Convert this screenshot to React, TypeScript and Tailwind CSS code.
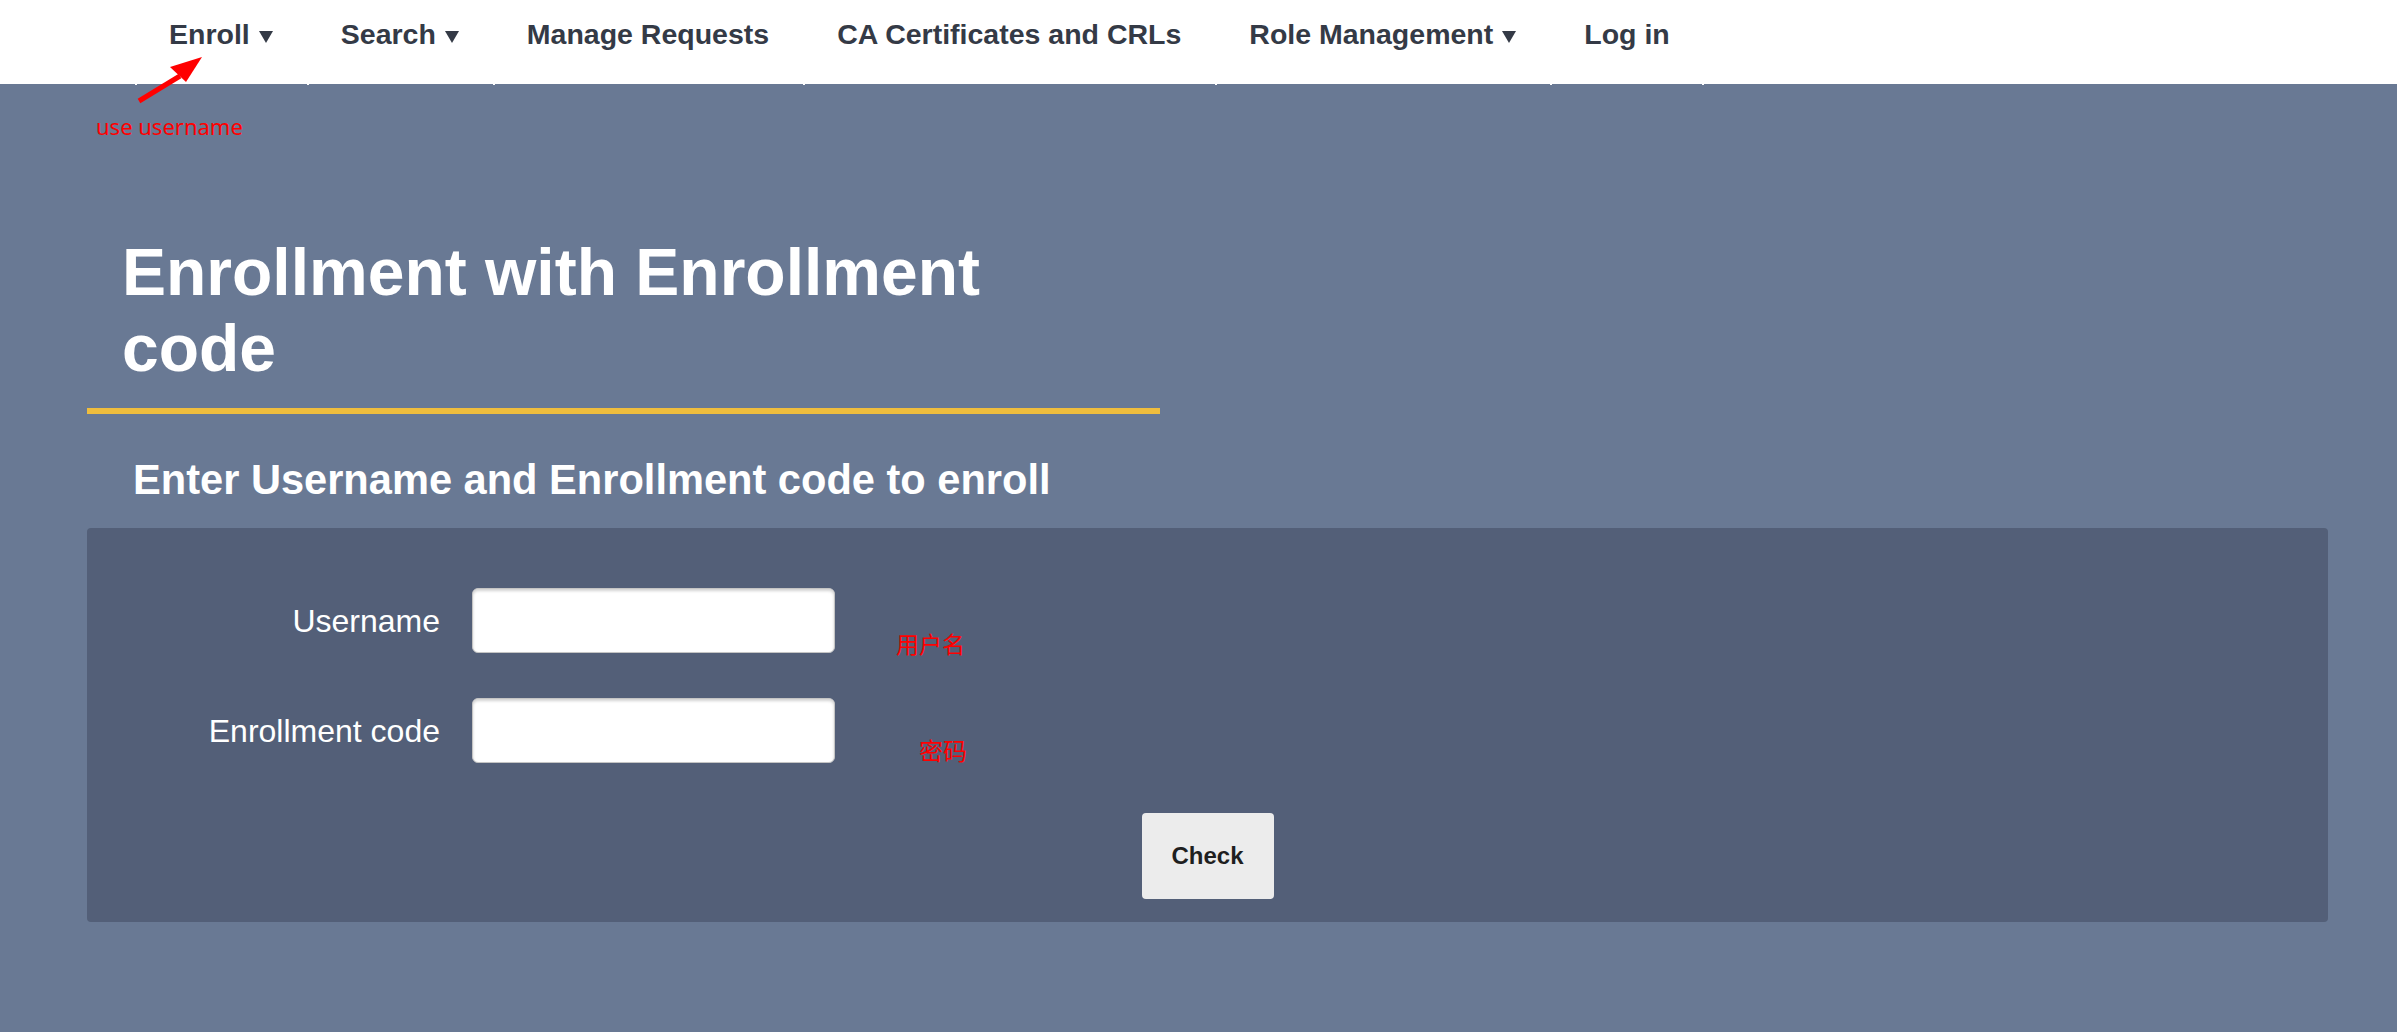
const navItems = [
  { label: 'Enroll', caret: true },
  { label: 'Search', caret: true },
  { label: 'Manage Requests', caret: false },
  { label: 'CA Certificates and CRLs', caret: false },
  { label: 'Role Management', caret: true },
  { label: 'Log in', caret: false },
];

function Caret() {
  return (
    <svg className="ml-[9px] mt-[13px] h-[12px] w-[14px] shrink-0" viewBox="0 0 14 12">
      <polygon points="0,0 14,0 7,12" fill="#343a46" />
    </svg>
  );
}

export default function App() {
  return (
    <div className="relative min-h-[1032px] bg-[#697994] font-['Liberation_Sans',Arial,sans-serif]">
      {/* top navigation */}
      <nav className="h-[84px] bg-white">
        <ul className="flex pl-[135px]">
          {navItems.map((item, i) => (
            <li key={item.label} className="relative flex h-[84px] items-start px-[34px] pt-[18px]">
              <span className="text-[28.5px] font-bold leading-[32px] text-[#343a46] whitespace-nowrap">
                {item.label}
              </span>
              {item.caret && <Caret />}
              <span className="absolute -bottom-[1px] left-0 h-[1px] w-[2px] bg-white" />
              {i === navItems.length - 1 && (
                <span className="absolute -bottom-[1px] right-0 h-[1px] w-[2px] bg-white" />
              )}
            </li>
          ))}
        </ul>
      </nav>

      {/* red annotation under Enroll */}
      <svg className="absolute left-[130px] top-[50px] h-[60px] w-[80px]" viewBox="0 0 80 60">
        <line x1="9" y1="51" x2="50" y2="26" stroke="#ff0000" strokeWidth="5" />
        <polygon points="72,7 40,17 56,32" fill="#ff0000" />
      </svg>
      <span className="absolute left-[96px] top-[115px] font-['Noto_Sans',sans-serif] text-[22px] leading-[22px] text-[#ff0000]">
        use username
      </span>

      <main className="pl-[87px] pr-[69px] pt-[150px]">
        <div className="w-[1073px] border-b-[6px] border-[#efbd3d] pb-[22px] pl-[35px] pr-[34px]">
          <h1 className="text-[66px] font-bold leading-[76px] text-white">
            Enrollment with Enrollment code
          </h1>
        </div>

        <h2 className="mt-[42px] pl-[46px] text-[41.6px] font-bold leading-[48px] text-white">
          Enter Username and Enrollment code to enroll
        </h2>

        <div className="relative mt-[24px] h-[394px] rounded-[4px] bg-[#535f78] pt-[60px]">
          <div className="flex flex-col gap-[45px]">
            <div className="flex items-center">
              <label className="w-[353px] text-right text-[32px] leading-[36px] text-white">Username</label>
              <input
                type="text"
                className="ml-[32px] h-[65px] w-[363px] rounded-[6px] border border-[#c4c4c4] bg-white shadow-[inset_0_2px_3px_rgba(0,0,0,0.18)] outline-none"
              />
            </div>
            <div className="flex items-center">
              <label className="w-[353px] text-right text-[32px] leading-[36px] text-white">Enrollment code</label>
              <input
                type="text"
                className="ml-[32px] h-[65px] w-[363px] rounded-[6px] border border-[#c4c4c4] bg-white shadow-[inset_0_2px_3px_rgba(0,0,0,0.18)] outline-none"
              />
            </div>
          </div>

          <div className="mt-[50px] flex justify-center">
            <button className="h-[86px] w-[132px] rounded-[4px] bg-[#ececec] text-[24px] font-bold text-[#1f1f1f]">
              Check
            </button>
          </div>

          <span className="absolute left-[809px] top-[102px] font-['Noto_Sans_CJK_SC',sans-serif] text-[23px] leading-[26px] text-[#ff0000]">
            用户名
          </span>
          <span className="absolute left-[832px] top-[209px] font-['Noto_Sans_CJK_SC',sans-serif] text-[24px] leading-[26px] text-[#ff0000]">
            密码
          </span>
        </div>
      </main>
    </div>
  );
}
